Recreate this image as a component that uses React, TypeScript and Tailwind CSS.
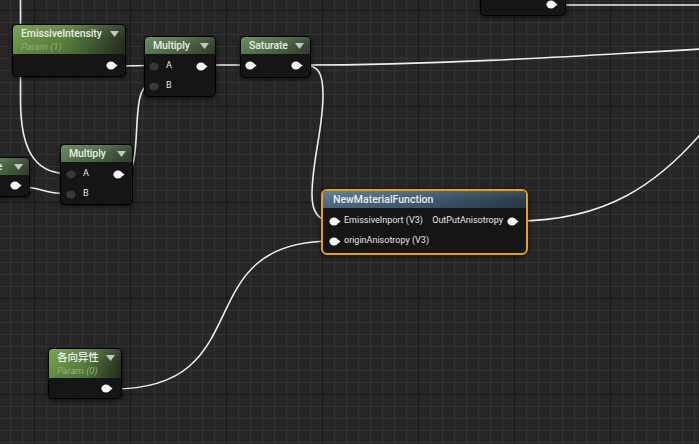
import React from "react";

const Pin = ({ on }: { on?: boolean }) => (
  <svg width="12" height="9" viewBox="0 0 12 9" className="shrink-0">
    <ellipse cx="5" cy="4.5" rx="4.6" ry="4" fill={on ? "#f5f5f5" : "#383838"} />
    {on && <path d="M8.6 2.3 L11.6 4.5 L8.6 6.7 Z" fill="#f5f5f5" />}
  </svg>
);

const Caret = () => (
  <svg width="9" height="6" viewBox="0 0 9 6" className="shrink-0">
    <path d="M0 0 H9 L4.5 6 Z" fill="#c6c6c6" />
  </svg>
);

type NodeProps = {
  className: string;
  header: string;
  title: string;
  sub?: string;
  children?: React.ReactNode;
};

const Node = ({ className, header, title, sub, children }: NodeProps) => (
  <div
    className={`absolute rounded-[5px] border border-black bg-[#141514] shadow-[0_1px_5px_rgba(0,0,0,0.7)] ${className}`}
  >
    <div className={`relative overflow-hidden rounded-t-[4px] ${header}`}>
      <div className="absolute inset-0 bg-linear-to-b from-white/10 via-transparent to-black/10" />
      <div className="relative flex items-start justify-between gap-1 pl-[8px] pr-[6px]">
        <div className="flex min-w-0 flex-col">
          <span className="h-[17px] whitespace-nowrap text-[10.5px] font-medium leading-[17px] tracking-[-0.1px] text-[#ececec]">
            {title}
          </span>
          {sub && <span className="mt-[-2px] h-[14px] text-[9.5px] italic leading-[14px] text-[#93ad83]">{sub}</span>}
        </div>
        <div className="pt-[6px]">
          <Caret />
        </div>
      </div>
    </div>
    {children}
  </div>
);

const Row = ({ children }: { children: React.ReactNode }) => (
  <div className="flex h-[20px] items-center justify-between">{children}</div>
);

const In = ({ label, on }: { label: string; on?: boolean }) => (
  <div className="flex items-center gap-[5px] text-[9px] text-[#e6e6e6]">
    <Pin on={on} />
    <span>{label}</span>
  </div>
);

const GREEN = "bg-linear-to-r from-[#5f8355] via-[#4d6b45] to-[#344430]";
const PARAM = "bg-linear-to-r from-[#6c9b47] via-[#567c3b] to-[#26301f]";
const BLUE = "bg-linear-to-r from-[#52728b] via-[#3f5b70] to-[#2a3b49]";

export default function App() {
  return (
    <div className="relative h-[444px] w-[699px] overflow-hidden bg-[#262626] font-['Roboto','Noto_Sans_CJK_SC',sans-serif]">
      <svg className="absolute inset-0" width="699" height="444">
        <defs>
          <pattern id="minor" width="12" height="12" x="10" y="10" patternUnits="userSpaceOnUse">
            <rect width="12" height="12" fill="#262626" />
            <rect width="12" height="1" fill="#343434" />
            <rect width="1" height="12" fill="#343434" />
          </pattern>
          <pattern id="major" width="96" height="96" x="34" y="10" patternUnits="userSpaceOnUse">
            <rect width="96" height="1" fill="#181818" />
            <rect width="1" height="96" fill="#181818" />
          </pattern>
        </defs>
        <rect width="699" height="444" fill="url(#minor)" />
        <rect width="699" height="444" fill="url(#major)" />
        <g fill="none" stroke="#ededed" strokeWidth="1.6" strokeLinecap="round">
          <path d="M556 5 L705 5" />
          <path d="M303 65 C400 65 450 62 520 59 S640 52 720 48" />
          <path d="M303 65 C318 65 323 72 323 95 C323 130 312 160 312 195 C312 212 318 221 332 221" />
          <path d="M208 65 L246 65" />
          <path d="M118 66 L150 65.5" />
          <path d="M124 174 C145 174 128 85 150 85" />
          <path d="M20.5 -5 L20.5 100 C20.5 150 35 172 64 173.5" />
          <path d="M21 187 C40 187 45 193.5 64 193.5" />
          <path d="M113 389 C263 389 184 241 332 241" />
          <path d="M516 221 C600 221 660 190 720 110" />
        </g>
      </svg>

      {/* node running off the top edge */}
      <div className="absolute left-[480px] top-[-40px] h-[56px] w-[86px] rounded-[5px] border border-black bg-[#141514] shadow-[0_1px_5px_rgba(0,0,0,0.7)]">
        <div className="absolute bottom-[6px] right-[7px]">
          <Pin on />
        </div>
      </div>

      <Node className="left-[12px] top-[24px] w-[114px]" header={PARAM} title="EmissiveIntensity" sub="Param (1)">
        <div className="flex h-[22px] items-center justify-end pr-[7px]">
          <Pin on />
        </div>
      </Node>

      <Node className="left-[144px] top-[36px] w-[72px]" header={GREEN} title="Multiply">
        <div className="pl-[4px] pr-[7px] pt-[2px]">
          <Row>
            <In label="A" />
            <Pin on />
          </Row>
          <Row>
            <In label="B" />
          </Row>
        </div>
      </Node>

      <Node className="left-[240px] top-[36px] w-[71px]" header={GREEN} title="Saturate">
        <div className="pb-[2px] pl-[4px] pr-[7px] pt-[1px]">
          <Row>
            <Pin on />
            <Pin on />
          </Row>
        </div>
      </Node>

      <Node className="left-[-32px] top-[157px] w-[62px]" header={GREEN} title="Scale">
        <div className="flex h-[21px] items-center justify-end pr-[7px]">
          <Pin on />
        </div>
      </Node>

      <Node className="left-[60px] top-[144px] w-[73px]" header={GREEN} title="Multiply">
        <div className="pl-[5px] pr-[7px] pt-[2px]">
          <Row>
            <In label="A" />
            <Pin on />
          </Row>
          <Row>
            <In label="B" />
          </Row>
        </div>
      </Node>

      <div className="absolute left-[321px] top-[189px] w-[207px] rounded-[6px] border-2 border-[#e9a00f] bg-[#141514] shadow-[0_1px_5px_rgba(0,0,0,0.7)]">
        <div className={`relative h-[17px] overflow-hidden rounded-t-[4px] ${BLUE}`}>
          <div className="absolute inset-0 bg-linear-to-b from-white/10 via-transparent to-black/10" />
          <span className="relative block pl-[10px] text-[10.5px] font-medium leading-[17px] text-[#ececec]">
            NewMaterialFunction
          </span>
        </div>
        <div className="pb-[2px] pl-[6px] pr-[7px] pt-[3px]">
          <Row>
            <div className="flex items-center gap-[3px] text-[9px] text-[#e6e6e6]">
              <Pin on />
              <span>EmissiveInport (V3)</span>
            </div>
            <div className="flex items-center gap-[4px] text-[9px] text-[#e6e6e6]">
              <span>OutPutAnisotropy</span>
              <Pin on />
            </div>
          </Row>
          <Row>
            <div className="flex items-center gap-[3px] text-[9px] text-[#e6e6e6]">
              <Pin on />
              <span>originAnisotropy (V3)</span>
            </div>
          </Row>
        </div>
      </div>

      <Node className="left-[48px] top-[348px] w-[74px]" header={PARAM} title="各向异性" sub="Param (0)">
        <div className="flex h-[20px] items-center justify-end pr-[8px]">
          <Pin on />
        </div>
      </Node>
    </div>
  );
}
